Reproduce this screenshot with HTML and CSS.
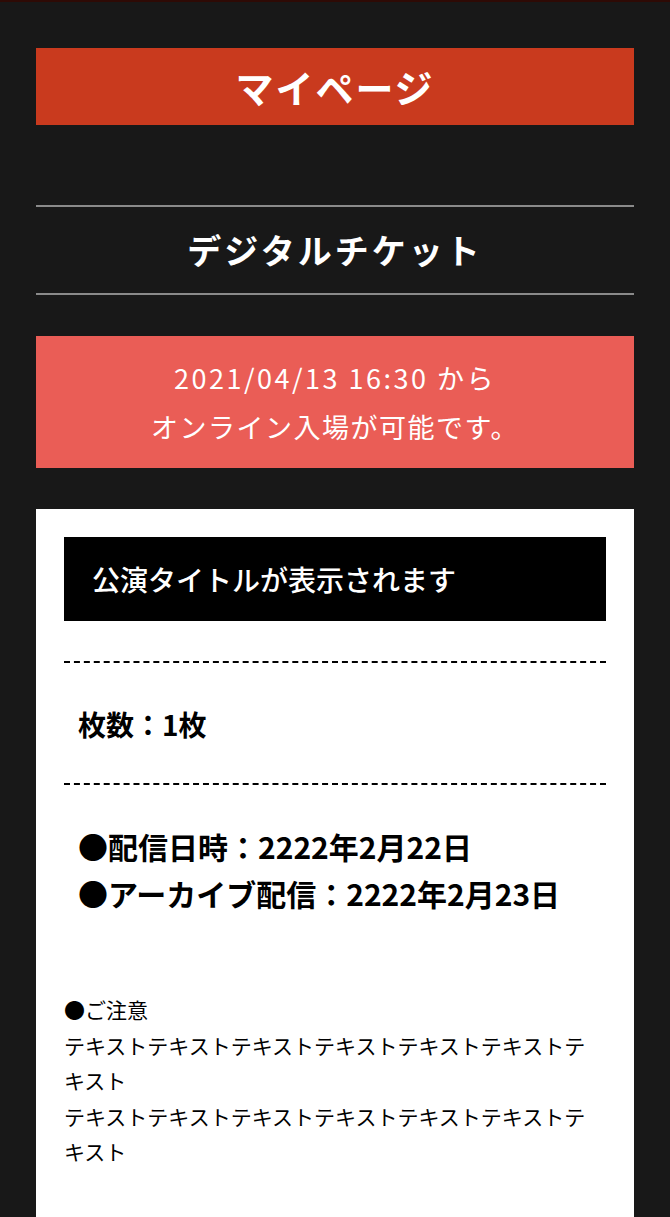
FILE: index.html
```html
<!DOCTYPE html>
<html lang="ja">
    <head>
        <meta charset="utf-8">
        <meta name="viewport" content="width=device-width">
        <title>マイページ</title>
        <link rel="stylesheet" href="styles.css">
    </head>
    <body>
        <main class="page">
            <h1 class="page-title">マイページ</h1>
            <h2 class="section-title">デジタルチケット</h2>
            <p class="notice"><span class="notice-date">2021/04/13 16:30 から</span><br>オンライン入場が可能です。</p>

            <!-- Ticket card -->
            <section class="ticket">
                <h3 class="ticket-name">公演タイトルが表示されます</h3>
                <p class="ticket-count">枚数：1枚</p>
                <ul class="ticket-dates">
                    <li>●配信日時：2222年2月22日</li>
                    <li>●アーカイブ配信：2222年2月23日</li>
                </ul>
                <div class="ticket-notes">
                    ●ご注意<br>
                    テキストテキストテキストテキストテキストテキストテキスト<br>
                    テキストテキストテキストテキストテキストテキストテキスト
                </div>
            </section>
        </main>
    </body>
</html>
```

FILE: styles.css
```css
html {
    background-color: #181818;
    color: #fff;
    font-family: "Noto Sans CJK JP", "Noto Sans", sans-serif;
}

body {
    margin: 0;
    border-top: 2px solid #2e0a05;
}

.page {
    width: 598px;
    margin: 0 auto;
    padding-top: 46px;
}

.page-title {
    margin: 0;
    height: 77px;
    line-height: 77px;
    background-color: #c93a1e;
    text-align: center;
    font-size: 38px;
    font-weight: bold;
    letter-spacing: 2px;
}

.section-title {
    margin: 80px 0 0;
    height: 86px;
    line-height: 86px;
    border-top: 2px solid #8a8a8a;
    border-bottom: 2px solid #8a8a8a;
    text-align: center;
    font-size: 34px;
    font-weight: bold;
    letter-spacing: 3px;
}

.notice {
    margin: 41px 0 0;
    padding: 17px 0;
    background-color: #ea5d56;
    text-align: center;
    font-size: 27px;
    line-height: 49px;
    letter-spacing: 1.5px;
}

.notice-date {
    letter-spacing: 2.5px;
}

.ticket {
    margin-top: 41px;
    padding: 28px 28px 60px;
    background-color: #fff;
    color: #000;
}

.ticket-name {
    margin: 0;
    height: 84px;
    line-height: 84px;
    padding: 0 28px;
    background-color: #000;
    color: #fff;
    font-size: 28px;
    font-weight: 500;
}

.ticket-count {
    margin: 40px 0 0;
    padding: 41px 14px 39px;
    border-top: 2px dashed #000;
    border-bottom: 2px dashed #000;
    font-size: 28px;
    font-weight: bold;
    line-height: 40px;
}

.ticket-dates {
    list-style: none;
    margin: 0;
    padding: 38px 0 0 14px;
    font-size: 30px;
    font-weight: bold;
    line-height: 47px;
}

.ticket-notes {
    margin-top: 75px;
    font-size: 21px;
    line-height: 35.5px;
}
```
